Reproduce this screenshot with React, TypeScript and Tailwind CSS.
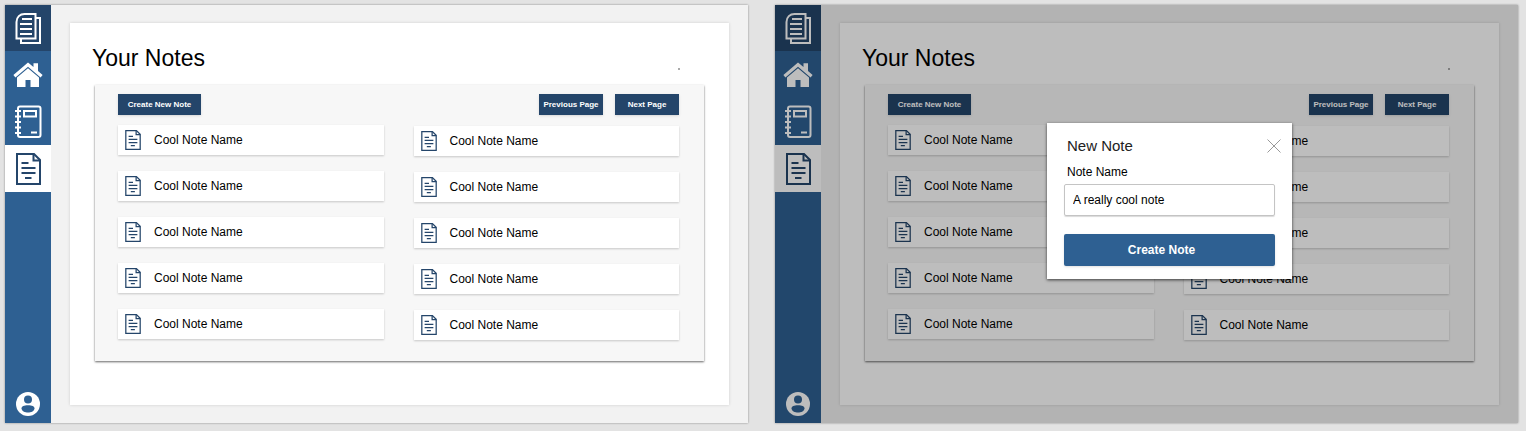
import { useId } from "react";

function NoteIcon({ className }: { className: string }) {
  return (
    <svg viewBox="0 0 25 32" fill="none" stroke="currentColor" strokeWidth="2" className={className} aria-hidden="true">
      <path d="M1 1H18L24 7V31H1Z" />
      <path d="M17.500 1V7.500H24" />
      <path d="M5.500 10H12.500M5.500 15H19.500M5.500 20H19.500M9 25H15.500" />
    </svg>
  );
}

function PagesIcon() {
  return (
    <svg viewBox="0 0 26 32" fill="none" stroke="currentColor" strokeWidth="2" className="h-8 w-[26px]" aria-hidden="true">
      <path d="M1.500 10C1.500 5 5 2 9.500 2H20.500V26.500H1.500Z" />
      <path d="M21 6H25V31H6V27" />
      <path d="M7 7H17M5 12H17M5 17H17M5 22H17" />
    </svg>
  );
}

function HomeIcon() {
  return (
    <svg viewBox="0 0 30 26" fill="currentColor" className="h-[26px] w-[30px]" aria-hidden="true">
      <path d="M15 0.500L20.500 5V1.200H25V9L29.600 13L27.600 15.600L15 4.800L2.400 15.600L0.400 13Z" />
      <path d="M15 6.200L26 15.600V25H17.500V18H12.500V25H4V15.600Z" />
    </svg>
  );
}

function NotebookIcon() {
  return (
    <svg viewBox="0 0 28 34" fill="none" stroke="currentColor" strokeWidth="2" className="h-[34px] w-7" aria-hidden="true">
      <rect x="4" y="1.500" width="22.500" height="30.500" rx="2" />
      <rect x="10" y="6" width="12" height="5.500" />
      <path d="M1 6H7M1 11.500H7M1 17H7M1 22.500H7M1 28H7M17 27.500H23" />
    </svg>
  );
}

function UserIcon() {
  return (
    <svg viewBox="0 0 24 24" className="size-6" aria-hidden="true">
      <circle cx="12" cy="12" r="12" fill="currentColor" />
      <circle cx="12" cy="7.500" r="4" className="fill-[#2e6092]" />
      <path d="M5.500 16.500C5.500 14 8 13.200 12 13.200S18.500 14 18.500 16.500C18 19.500 15 20.500 12 20.500S6 19.500 5.500 16.500Z" className="fill-[#2e6092]" />
    </svg>
  );
}

function Sidebar() {
  const item = "flex h-[47px] items-center justify-center text-white";
  return (
    <nav className="flex w-[46px] shrink-0 flex-col bg-[#2e6092]">
      <a href="#" aria-label="All documents" className="flex h-[46px] items-center justify-center bg-[#24456a] text-white">
        <PagesIcon />
      </a>
      <a href="#" aria-label="Home" className={item}>
        <HomeIcon />
      </a>
      <a href="#" aria-label="Notebooks" className={item}>
        <NotebookIcon />
      </a>
      <a href="#" aria-label="Notes" className="flex h-[47px] items-center justify-center bg-white text-[#24456a]">
        <NoteIcon className="h-8 w-[25px]" />
      </a>
      <a href="#" aria-label="Account" className="mt-auto flex items-center justify-center pb-[7px] text-white">
        <UserIcon />
      </a>
    </nav>
  );
}

function SmallButton({ label, className }: { label: string; className: string }) {
  return (
    <button type="button" className={`h-[21px] bg-[#24456a] text-center text-[8px] text-white shadow-sm ${className}`}>
      {label}
    </button>
  );
}

function NoteList({ className }: { className: string }) {
  return (
    <ul className={`flex flex-1 flex-col gap-4 ${className}`}>
      {[1, 2, 3, 4, 5].map((n) => (
        <li key={n}>
          <a href="#" className="flex h-[30px] items-center gap-[13px] bg-white pl-[7px] text-xs text-black shadow-[0_1px_2px_rgba(0,0,0,0.2)]">
            <NoteIcon className="h-5 w-4 text-[#24456a]" />
            Cool Note Name
          </a>
        </li>
      ))}
    </ul>
  );
}

function NewNoteDialog() {
  const id = useId();
  return (
    <div className="absolute inset-0 flex items-start justify-center bg-black/26 pt-[118px] pl-[46px]">
      <form
        role="dialog"
        aria-label="New Note"
        onSubmit={(e) => e.preventDefault()}
        className="flex w-[245px] flex-col bg-white px-[17px] py-[13px] shadow-[0_1px_3px_rgba(0,0,0,0.7)]"
      >
        <div className="flex items-center justify-between pl-[3px]">
          <h2 className="text-[15px] leading-5 text-[#222]">New Note</h2>
          <button type="button" aria-label="Close" className="-mr-1.5 text-[#999]">
            <svg viewBox="0 0 14 14" fill="none" stroke="currentColor" strokeWidth="1" className="size-3.5" aria-hidden="true">
              <path d="M0.500 0.500L13.500 13.500M13.500 0.500L0.500 13.500" />
            </svg>
          </button>
        </div>
        <label htmlFor={id} className="mt-2 pl-[3px] text-xs text-black">
          Note Name
        </label>
        <input
          id={id}
          type="text"
          defaultValue="A really cool note"
          className="mt-1 h-8 rounded-xs border border-[#c4c4c4] px-2 text-xs text-black shadow-[0_1px_1px_rgba(0,0,0,0.15)]"
        />
        <button type="submit" className="mt-[18px] h-8 rounded-xs bg-[#2e6092] pr-4 text-xs font-bold text-white shadow-sm">
          Create Note
        </button>
      </form>
    </div>
  );
}

function NotesScreen({ dialog = false }: { dialog?: boolean }) {
  return (
    <section className="relative flex flex-1 bg-[#f2f2f2] shadow-[0_0_2px_rgba(0,0,0,0.4)]">
      <Sidebar />
      <main className="flex flex-1 flex-col px-[19px] py-[18px]">
        <div className="flex-1 bg-white px-[25px] pt-[19px] pb-[43px] shadow-[0_0_3px_rgba(0,0,0,0.15)]">
          <header className="mb-[11px] flex items-end justify-between pr-6">
            <h1 className="-ml-[3px] text-[23px] leading-8 text-black">Your Notes</h1>
            <span className="mb-1 size-0.5 bg-[#aaa]" aria-hidden="true" />
          </header>
          <div className="bg-[#f7f7f7] pt-[9px] pr-[25px] pb-[21px] pl-[23px] shadow-[0_1px_2px_rgba(0,0,0,0.6)]">
            <div className="flex gap-3">
              <SmallButton label="Create New Note" className="mr-auto w-[83px] font-bold" />
              <SmallButton label="Previous Page" className="w-16 font-bold" />
              <SmallButton label="Next Page" className="w-16 font-bold" />
            </div>
            <div className="mt-2.5 flex gap-[30px]">
              <NoteList className="" />
              <NoteList className="pt-px" />
            </div>
          </div>
        </div>
      </main>
      {dialog && <NewNoteDialog />}
    </section>
  );
}

export default function App() {
  return (
    <div className="flex min-h-screen gap-[27px] bg-[#e3e3e3] pt-[5px] pr-2 pb-2 pl-[5px] font-['Liberation_Sans',Arial,sans-serif]">
      <NotesScreen />
      <NotesScreen dialog />
    </div>
  );
}
